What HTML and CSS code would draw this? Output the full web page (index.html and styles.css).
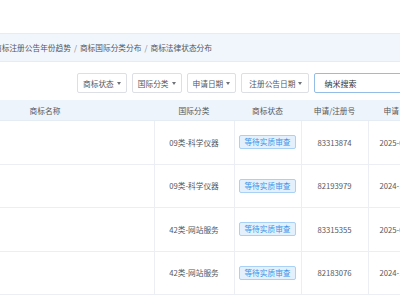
FILE: index.html
```html
<!DOCTYPE html>
<html>
  <head>
    <link rel="stylesheet" href="styles.css">
  </head>
  <body>
    <div class="page">
      <div class="crumbs">
        <span>商标注册公告年份趋势</span><span class="sep">/</span><span>商标国际分类分布</span><span class="sep">/</span><span>商标法律状态分布</span>
      </div>
      <div class="filters">
        <button class="drop">商标状态<i class="caret"></i></button>
        <button class="drop">国际分类<i class="caret"></i></button>
        <button class="drop">申请日期<i class="caret"></i></button>
        <button class="drop wide">注册公告日期<i class="caret"></i></button>
        <div class="search">纳米搜索</div>
      </div>
      <table class="grid">
        <colgroup>
          <col class="c-name"><col class="c-cls"><col class="c-state"><col class="c-no"><col class="c-date">
        </colgroup>
        <thead>
          <tr><th>商标名称</th><th>国际分类</th><th>商标状态</th><th>申请/注册号</th><th>申请日期</th></tr>
        </thead>
        <tbody>
          <tr><td></td><td>09类-科学仪器</td><td><span class="tag">等待实质审查</span></td><td>83313874</td><td>2025-04-15</td></tr>
          <tr><td></td><td>09类-科学仪器</td><td><span class="tag">等待实质审查</span></td><td>82193979</td><td>2024-12-06</td></tr>
          <tr><td></td><td>42类-网站服务</td><td><span class="tag">等待实质审查</span></td><td>83315355</td><td>2025-04-15</td></tr>
          <tr><td></td><td>42类-网站服务</td><td><span class="tag">等待实质审查</span></td><td>82183076</td><td>2024-12-06</td></tr>
        </tbody>
      </table>
    </div>
  </body>
</html>
```

FILE: styles.css
```css
html, body {
  margin: 0;
  overflow: hidden;
  background: #fff;
}
body {
  font-family: "Noto Sans CJK SC", "Liberation Sans", sans-serif;
  font-size: 7.7px;
  color: #54575d;
}
.page {
  width: 560px;
  margin-left: -64px;
  padding-top: 33px;
}
.crumbs {
  height: 27px;
  display: flex;
  align-items: center;
  padding-left: 58px;
  background: #f1f6fc;
  border-top: 1px solid #e4edf7;
  border-bottom: 1px solid #e4edf7;
  color: #54575d;
}
.sep {
  margin: 0 3px;
  color: #7d8087;
}
.filters {
  display: flex;
  gap: 5px;
  padding-left: 141px;
  margin-top: 11px;
  height: 20px;
}
.drop {
  display: flex;
  align-items: center;
  justify-content: center;
  gap: 3px;
  padding: 0 5px;
  height: 20px;
  background: #fff;
  border: 1px solid #dcdfe6;
  border-radius: 2px;
  font: inherit;
  color: #54575d;
}
.drop.wide {
  padding: 0 6px 0 7px;
}
.caret {
  width: 0;
  height: 0;
  border-top: 3px solid #6f7278;
  border-left: 2px solid transparent;
  border-right: 2px solid transparent;
}
.search {
  width: 120px;
  height: 18px;
  display: flex;
  align-items: center;
  padding-left: 9px;
  border: 1px solid #93bde6;
  border-radius: 2px;
  color: #303133;
  font-size: 8px;
}
.grid {
  margin-top: 7px;
  border-collapse: collapse;
  table-layout: fixed;
  width: 494px;
  font-size: inherit;
}
.c-name { width: 218px; }
.c-cls { width: 80px; }
.c-state { width: 67px; }
.c-no { width: 67px; }
.c-date { width: 62px; }
th {
  height: 20px;
  padding: 0;
  font-weight: normal;
  background: #eef4fb;
  color: #54575d;
  text-align: center;
  border-bottom: 1px solid #e6ecf3;
}
td {
  height: 42.5px;
  padding: 0;
  text-align: center;
  border-bottom: 1px solid #ebeef5;
  border-left: 1px solid #ebeef5;
}
td:first-child {
  border-left: none;
}
.tag {
  display: inline-block;
  padding: 0 4px;
  line-height: 12px;
  background: #e4f1fd;
  border: 1px solid #a9d1f5;
  border-radius: 2px;
  color: #3d93e6;
}
```
